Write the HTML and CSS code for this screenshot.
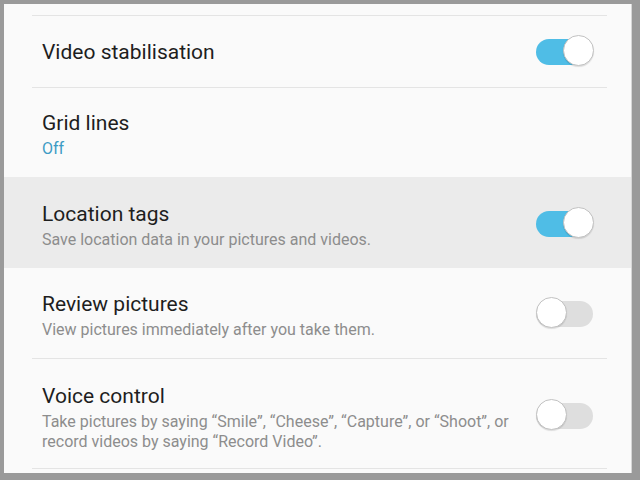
FILE: index.html
```html
<!DOCTYPE html>
<html>
<head>
<meta charset="utf-8">
<link rel="stylesheet" href="styles.css">
</head>
<body>
<div class="panel">
  <div class="row"><div class="inner top"></div></div>
  <div class="row r-video"><div class="inner">
    <div class="text"><div class="title">Video stabilisation</div></div>
    <div class="toggle on"><span class="track"></span><span class="thumb"></span></div>
  </div></div>
  <div class="row r-grid"><div class="inner noline">
    <div class="text"><div class="title">Grid lines</div><div class="value">Off</div></div>
  </div></div>
  <div class="row r-loc active"><div class="inner noline">
    <div class="text"><div class="title">Location tags</div><div class="sub">Save location data in your pictures and videos.</div></div>
    <div class="toggle on"><span class="track"></span><span class="thumb"></span></div>
  </div></div>
  <div class="row r-review"><div class="inner">
    <div class="text"><div class="title">Review pictures</div><div class="sub">View pictures immediately after you take them.</div></div>
    <div class="toggle"><span class="track"></span><span class="thumb"></span></div>
  </div></div>
  <div class="row r-voice"><div class="inner">
    <div class="text"><div class="title">Voice control</div><div class="sub">Take pictures by saying “Smile”, “Cheese”, “Capture”, or “Shoot”, or record videos by saying “Record Video”.</div></div>
    <div class="toggle"><span class="track"></span><span class="thumb"></span></div>
  </div></div>
</div>
</body>
</html>
```
FILE: styles.css
```css
html, body {
  margin: 0;
  padding: 0;
  width: 640px;
  height: 480px;
  overflow: hidden;
  background: #9a9a9a;
}
body {
  padding: 4px 0 0 4px;
  box-sizing: border-box;
  font-family: Roboto, "Liberation Sans", sans-serif;
}
.panel {
  width: 627px;
  height: 469px;
  background: #fafafa;
  border-right: 1px solid #d6d6d6;
  overflow: hidden;
}
.row { width: 100%; }
.row.active { background: #ebebeb; }
.inner {
  margin: 0 24px 0 28px;
  padding: 0 13px 0 10px;
  border-bottom: 1px solid #e4e4e4;
  display: flex;
  align-items: center;
  justify-content: space-between;
  box-sizing: border-box;
}
.inner.noline { border-bottom: none; }
.inner.top { height: 12px; }
.r-video .inner { height: 72px; }
.r-grid .inner { height: 89px; padding-top: 3px; }
.r-loc .inner { height: 91px; padding-top: 6px; }
.r-review .inner { height: 91px; padding-top: 4px; }
.r-voice .inner { height: 110px; padding-top: 7px; }
.text { flex: 1; min-width: 0; padding-right: 8px; }
.title {
  font-size: 21px;
  line-height: 26px;
  color: #1e1e1e;
}
.value {
  font-size: 16px;
  line-height: 20px;
  color: #3d9cc5;
  margin-top: 3px;
}
.sub {
  font-size: 16px;
  line-height: 20px;
  color: #8d8d8d;
  margin-top: 3px;
}
.toggle {
  position: relative;
  width: 58px;
  height: 33px;
  flex: none;
}
.r-voice .toggle { margin-top: -4px; }
.r-review .toggle { margin-top: -4px; }
.r-loc .toggle { margin-top: -4px; }
.track {
  position: absolute;
  left: 0;
  top: 4px;
  width: 57px;
  height: 26px;
  border-radius: 13px;
  background: #dedede;
}
.toggle.on .track { background: #4fbde6; width: 55px; }
.thumb {
  position: absolute;
  top: 0;
  left: 0;
  width: 29px;
  height: 29px;
  border-radius: 50%;
  background: #ffffff;
  border: 1.5px solid #c2c2c2;
  box-shadow: 0 1px 1px rgba(0,0,0,0.12);
}
.toggle.on .thumb { left: auto; right: 0; }
```
